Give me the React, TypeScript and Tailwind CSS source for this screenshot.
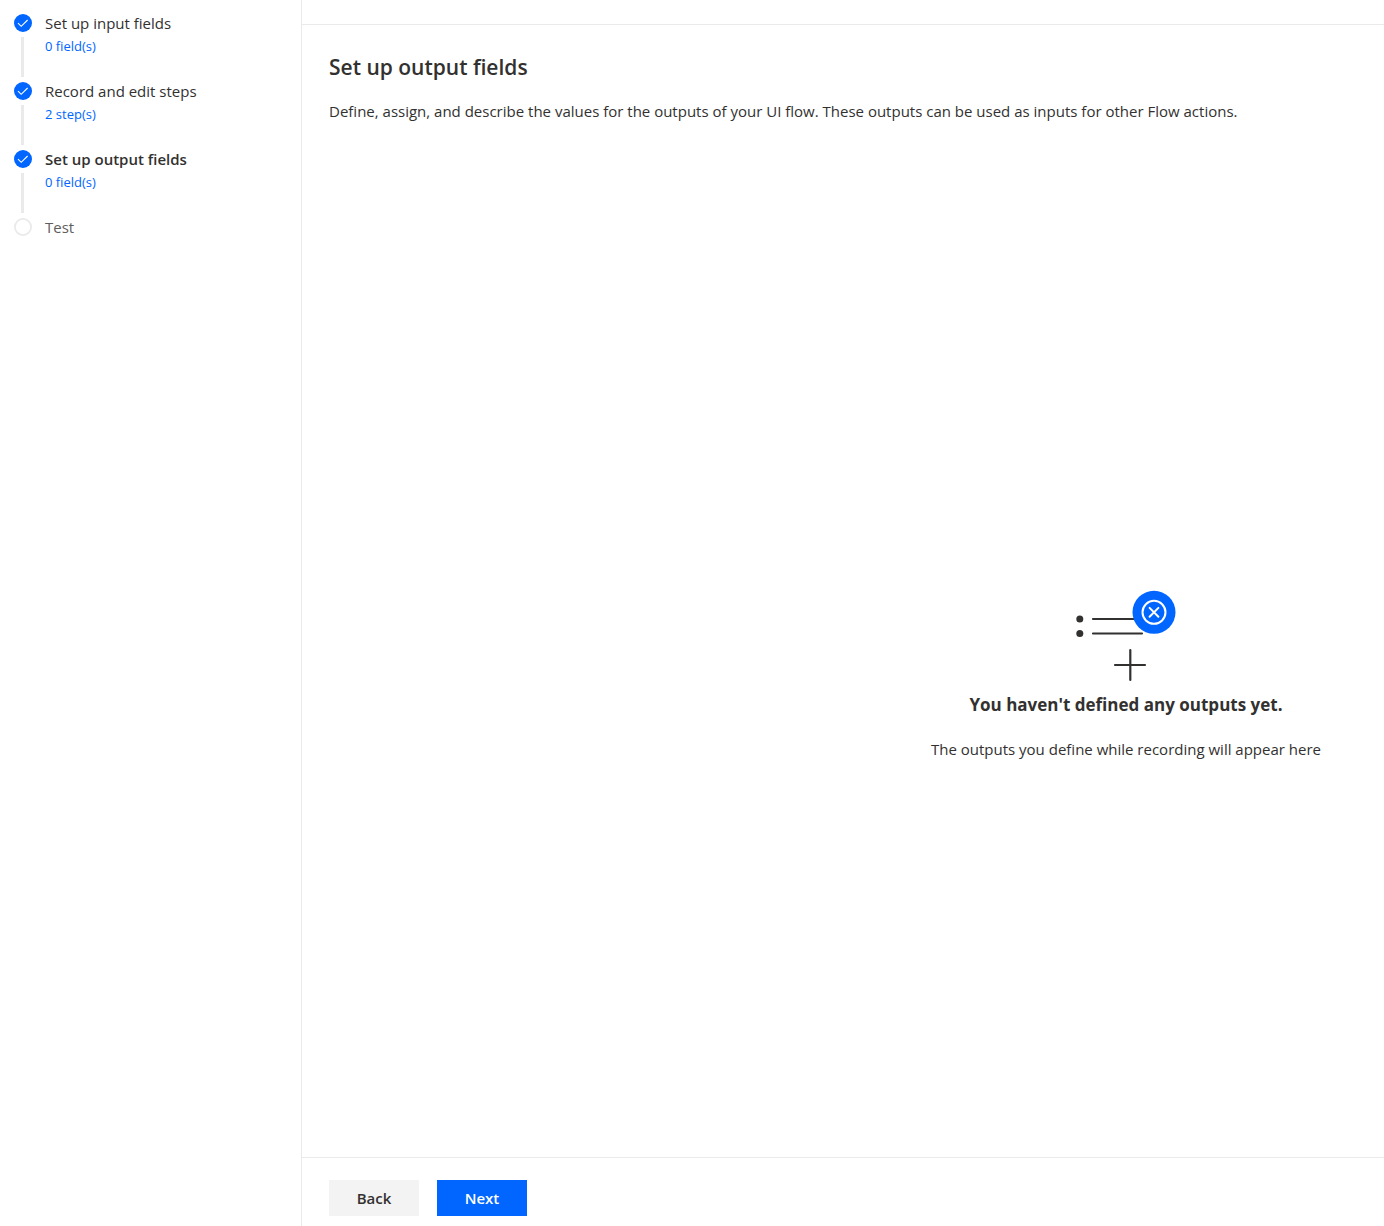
type Step = { label: string; detail?: string; state: 'done' | 'current' | 'pending' };

const steps: Step[] = [
  { label: 'Set up input fields', detail: '0 field(s)', state: 'done' },
  { label: 'Record and edit steps', detail: '2 step(s)', state: 'done' },
  { label: 'Set up output fields', detail: '0 field(s)', state: 'current' },
  { label: 'Test', state: 'pending' },
];

const labelStyles = {
  done: 'text-[#323130]',
  current: 'font-semibold text-[#323130]',
  pending: 'text-[#605e5c]',
};

function StepMarker({ complete }: { complete: boolean }) {
  return (
    <svg viewBox="0 0 18 18" className="size-[18px] shrink-0" fill="none" aria-hidden="true">
      {complete ? (
        <>
          <circle cx="9" cy="9" r="9" fill="#0066ff" />
          <path d="M4 9.2 7.2 12.3 13.6 6" stroke="#fff" strokeWidth="1.1" />
        </>
      ) : (
        <circle cx="9" cy="9" r="8.1" stroke="#eaeaea" strokeWidth="1.8" />
      )}
    </svg>
  );
}

function StepItem({ step, last }: { step: Step; last: boolean }) {
  return (
    <li className="flex gap-[13px]" aria-current={step.state === 'current' ? 'step' : undefined}>
      <div className="flex flex-col">
        <StepMarker complete={step.state !== 'pending'} />
        {!last && <div className="my-[5px] ml-[7px] h-10 w-[3px] bg-[#eaeaea]" />}
      </div>
      <div>
        <p className={`text-[15px] leading-[18px] ${labelStyles[step.state]}`}>{step.label}</p>
        {step.detail && (
          <a href="#" className="mt-1 block text-[13px] leading-5 text-[#0066ff]">
            {step.detail}
          </a>
        )}
      </div>
    </li>
  );
}

function EmptyArt() {
  return (
    <svg viewBox="0 0 102 92" className="h-[92px] w-[102px]" fill="none" aria-hidden="true">
      <g stroke="#323130" strokeWidth="2.2" strokeLinecap="round">
        <path d="M18 29h45M18 43.5h49" />
        <path d="M40 75h30M55.3 60v30" />
      </g>
      <circle cx="4.8" cy="29" r="3.5" fill="#323130" />
      <circle cx="4.8" cy="43.5" r="3.5" fill="#323130" />
      <circle cx="79" cy="22.3" r="21.5" fill="#0066ff" />
      <g stroke="#fff" strokeLinecap="round">
        <circle cx="79" cy="22.3" r="11.5" strokeWidth="2" />
        <path d="m74.6 17.9 8.8 8.8m0-8.8-8.8 8.8" strokeWidth="2" />
      </g>
    </svg>
  );
}

export default function App() {
  return (
    <div className="flex min-h-screen bg-white font-['Open_Sans','Noto_Sans',sans-serif] text-[#323130]">
      <nav aria-label="Progress" className="w-[302px] shrink-0 border-r border-[#eaeaea] px-3.5 pt-3.5">
        <ol>
          {steps.map((step, i) => (
            <StepItem key={step.label} step={step} last={i === steps.length - 1} />
          ))}
        </ol>
      </nav>
      <div className="flex min-w-0 flex-1 flex-col">
        <div className="h-[25px] border-b border-[#eaeaea]" />
        <main className="flex flex-1 flex-col px-[27px] pt-[26px]">
          <h1 className="text-[21px] leading-8 font-semibold">Set up output fields</h1>
          <p className="mt-4 text-[15px] leading-6">
            Define, assign, and describe the values for the outputs of your UI flow. These outputs can be used as inputs
            for other Flow actions.
          </p>
          <div className="flex flex-1 flex-col items-end justify-center pt-[70px] pr-9">
            <section className="flex flex-col items-center text-center">
              <EmptyArt />
              <h2 className="mt-[11px] text-[17px] leading-6 font-bold">You haven't defined any outputs yet.</h2>
              <p className="mt-5 text-[15px] leading-6">The outputs you define while recording will appear here</p>
            </section>
          </div>
        </main>
        <footer className="flex gap-[18px] border-t border-[#eaeaea] px-[27px] pt-[22px] pb-2.5">
          <button type="button" className="h-9 w-[90px] bg-[#f3f3f3] text-[15px] font-semibold">
            Back
          </button>
          <button type="button" className="h-9 w-[90px] bg-[#0066ff] text-[15px] font-semibold text-white">
            Next
          </button>
        </footer>
      </div>
    </div>
  );
}
